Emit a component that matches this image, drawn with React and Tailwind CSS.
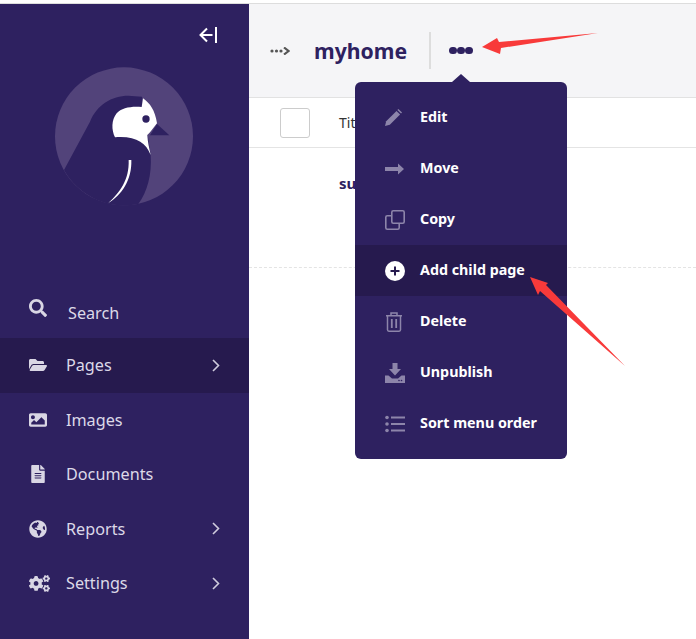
import { FaSearch, FaFolderOpen, FaImage, FaFileAlt, FaGlobeAmericas, FaCogs } from "react-icons/fa";

const sans = { fontFamily: '"Noto Sans", sans-serif' };

const navItems = [
  { label: "Pages", icon: FaFolderOpen, arrow: true, active: true },
  { label: "Images", icon: FaImage },
  { label: "Documents", icon: FaFileAlt },
  { label: "Reports", icon: FaGlobeAmericas, arrow: true },
  { label: "Settings", icon: FaCogs, arrow: true },
];

function WagtailLogo() {
  return (
    <svg width="170" height="160" viewBox="0 0 510 480">
      <circle cx="252" cy="244" r="207" fill="#52437a" />
      <path d="M72 345 L150 200 C170 150 215 122 265 122 L306 125 L332 300 C336 360 322 410 295 447 A207 207 0 0 1 72 345 Z" fill="#2e2160" />
      <path d="M225 247 C214 225 214 195 230 175 C245 158 275 153 305 156 L309 130 C330 145 345 165 351 205 L330 232 L322 240 C323 262 328 280 332 300 C318 262 285 242 225 247 Z" fill="#ffffff" />
      <path d="M351 207 L388 241 L330 241 Z" fill="#2e2160" />
      <circle cx="318" cy="192" r="11" fill="#2e2160" />
      <path d="M266 315 L274 315 C276 375 245 420 205 444 C240 412 268 375 266 315 Z" fill="#ffffff" />
    </svg>
  );
}

function Chevron() {
  return (
    <svg width="8" height="13" viewBox="0 0 8 13" fill="none" stroke="#cfcbdd" strokeWidth="1.6">
      <path d="M1 1L6.5 6.5L1 12" />
    </svg>
  );
}

function NavRow({ item }) {
  const Icon = item.icon;
  return (
    <div className={`flex items-center h-[54.5px] pl-[29px] pr-[29px] text-[#dcd9e8] text-[16.2px] ${item.active ? "bg-[#261a4e]" : ""}`}>
      <span className="w-[37px] flex items-center">
        <Icon size={item.label === "Settings" ? 21 : 18} className="text-[#d9d6e4]" />
      </span>
      <span className="flex-1">{item.label}</span>
      {item.arrow && <Chevron />}
    </div>
  );
}

const stroke = "#8d85aa";

const menuItems = [
  {
    label: "Edit",
    icon: (
      <svg width="17" height="17" viewBox="0 0 17 17" fill={stroke}>
        <path d="M0 17L1.2 12.2L11.5 1.9L15.1 5.5L4.8 15.8Z" />
        <path d="M12.4 1L13.4 0L17 3.6L16 4.6Z" />
      </svg>
    ),
  },
  {
    label: "Move",
    icon: (
      <svg width="20" height="12" viewBox="0 0 20 12">
        <path d="M0 4H13V0.5L19 6L13 11.5V8H0Z" fill={stroke} />
      </svg>
    ),
  },
  {
    label: "Copy",
    icon: (
      <svg width="20" height="20" viewBox="0 0 20 20" fill="none" stroke={stroke} strokeWidth="1.6">
        <rect x="6.8" y="0.8" width="12.4" height="12.4" rx="1.5" />
        <path d="M6.8 5.8H2.3C1.4 5.8 0.8 6.4 0.8 7.3V17.7C0.8 18.6 1.4 19.2 2.3 19.2H12.7C13.6 19.2 14.2 18.6 14.2 17.7V13.2" />
      </svg>
    ),
  },
  {
    label: "Add child page",
    active: true,
    icon: (
      <svg width="20" height="20" viewBox="0 0 20 20">
        <circle cx="10" cy="10" r="10" fill="#ffffff" />
        <path d="M10 5.5V14.5M5.5 10H14.5" stroke="#261a4e" strokeWidth="2" />
      </svg>
    ),
  },
  {
    label: "Delete",
    icon: (
      <svg width="18" height="20" viewBox="0 0 18 20" fill="none" stroke={stroke} strokeWidth="1.5">
        <path d="M1 3.8H17M6 3.8V1H12V3.8M2.5 3.8V17.8C2.5 18.6 3.1 19.2 3.9 19.2H14.1C14.9 19.2 15.5 18.6 15.5 17.8V3.8" />
        <path d="M6.8 7V16M11.2 7V16" strokeWidth="1.8" />
      </svg>
    ),
  },
  {
    label: "Unpublish",
    icon: (
      <svg width="20" height="20" viewBox="0 0 20 20">
        <path d="M7.5 0H12.5V6H16L10 12.5L4 6H7.5Z" fill={stroke} />
        <path d="M0 12.5H3.5L7 15.5H13L16.5 12.5H20V20H0Z" fill={stroke} />
        <circle cx="14" cy="17.5" r="0.8" fill="#2e2160" />
        <circle cx="16.5" cy="17.5" r="0.8" fill="#2e2160" />
      </svg>
    ),
  },
  {
    label: "Sort menu order",
    icon: (
      <svg width="20" height="18" viewBox="0 0 20 18" fill={stroke}>
        <circle cx="2" cy="2.5" r="1.8" />
        <circle cx="2" cy="9" r="1.8" />
        <circle cx="2" cy="15.5" r="1.8" />
        <rect x="6" y="1.5" width="14" height="2" />
        <rect x="6" y="8" width="14" height="2" />
        <rect x="6" y="14.5" width="14" height="2" />
      </svg>
    ),
  },
];

function PageMenu() {
  return (
    <div className="absolute left-[355px] top-[82px] w-[212px] rounded-[6px] bg-[#2e2160] py-[10px]">
      <div className="absolute left-[97px] top-[-8px] w-0 h-0 border-x-[9px] border-x-transparent border-b-[8px] border-b-[#2e2160]" />
      {menuItems.map((item) => (
        <div key={item.label} className={`flex items-center h-[51px] pl-[30px] text-white font-bold text-[14.3px] ${item.active ? "bg-[#261a4e]" : ""}`}>
          <span className="w-[35px] flex items-center">{item.icon}</span>
          <span className="-mt-[1px]">{item.label}</span>
        </div>
      ))}
    </div>
  );
}

export default function App() {
  return (
    <div className="relative w-[696px] h-[639px] overflow-hidden bg-white" style={sans}>
      <div className="h-[4px] bg-white border-b border-[#dddddd]" />
      <div className="flex h-[635px]">
        <aside className="w-[249px] shrink-0 bg-[#2e2160] flex flex-col">
          <div className="flex justify-end pt-[22px] pr-[31px] h-[51px]">
            <svg width="20" height="18" viewBox="0 0 20 18" fill="none" stroke="#ffffff" strokeWidth="2">
              <path d="M9 2.5L2.5 9L9 15.5M2.5 9H14.5" />
              <path d="M18 1V17" />
            </svg>
          </div>
          <div className="flex justify-center h-[226px]">
            <WagtailLogo />
          </div>
          <div className="flex items-center h-[57px] pl-[29px] text-[#dcd9e8] text-[16.2px]">
            <span className="w-[39px]"><FaSearch size={18} className="text-[#d9d6e4] -mt-[3px]" /></span>
            <span className="mt-[8px]">Search</span>
          </div>
          {navItems.map((item) => (
            <NavRow key={item.label} item={item} />
          ))}
        </aside>
        <main className="flex-1 min-w-0">
          <header className="h-[94px] bg-[#f5f5f7] border-b border-[#e2e2e2] flex items-center pl-[21px]">
            <svg width="20" height="8" viewBox="0 0 20 8" fill="#555555">
              <circle cx="2" cy="4" r="1.6" />
              <circle cx="6.5" cy="4" r="1.6" />
              <circle cx="11" cy="4" r="1.6" />
              <path d="M14 0.5L18.5 4L14 7.5" fill="none" stroke="#555555" strokeWidth="2.2" />
            </svg>
            <h1 className="ml-[24px] text-[21.2px] font-bold text-[#2e2160]">myhome</h1>
            <div className="ml-[22px] w-[2px] h-[37px] bg-[#dddddd]" />
            <div className="ml-[18px] flex gap-[0.5px]">
              <span className="w-[7.5px] h-[7.5px] rounded-full bg-[#2e2160]" />
              <span className="w-[7.5px] h-[7.5px] rounded-full bg-[#2e2160]" />
              <span className="w-[7.5px] h-[7.5px] rounded-full bg-[#2e2160]" />
            </div>
          </header>
          <div className="h-[50px] border-b border-[#e4e4e4] flex items-center pl-[31px]">
            <div className="w-[30px] h-[30px] rounded-[3px] border border-[#cccccc] bg-white" />
            <span className="ml-[29px] text-[14px] text-[#333333]">Title</span>
          </div>
          <div className="h-[120px] border-b border-dashed border-[#e4e4e4] pl-[90px] pt-[23px]">
            <span className="text-[15px] font-bold text-[#2e2160]">subpage</span>
          </div>
        </main>
      </div>
      <PageMenu />
      {/* red annotation arrows */}
      <svg className="absolute left-0 top-0 pointer-events-none" width="696" height="639">
        <polygon points="482,47 497,38 499,42 598,33 501,48 500,54" fill="#f83a3a" />
        <polygon points="530,277 548,283 546,285 625,366 540,291 538,295" fill="#f83a3a" />
      </svg>
    </div>
  );
}
